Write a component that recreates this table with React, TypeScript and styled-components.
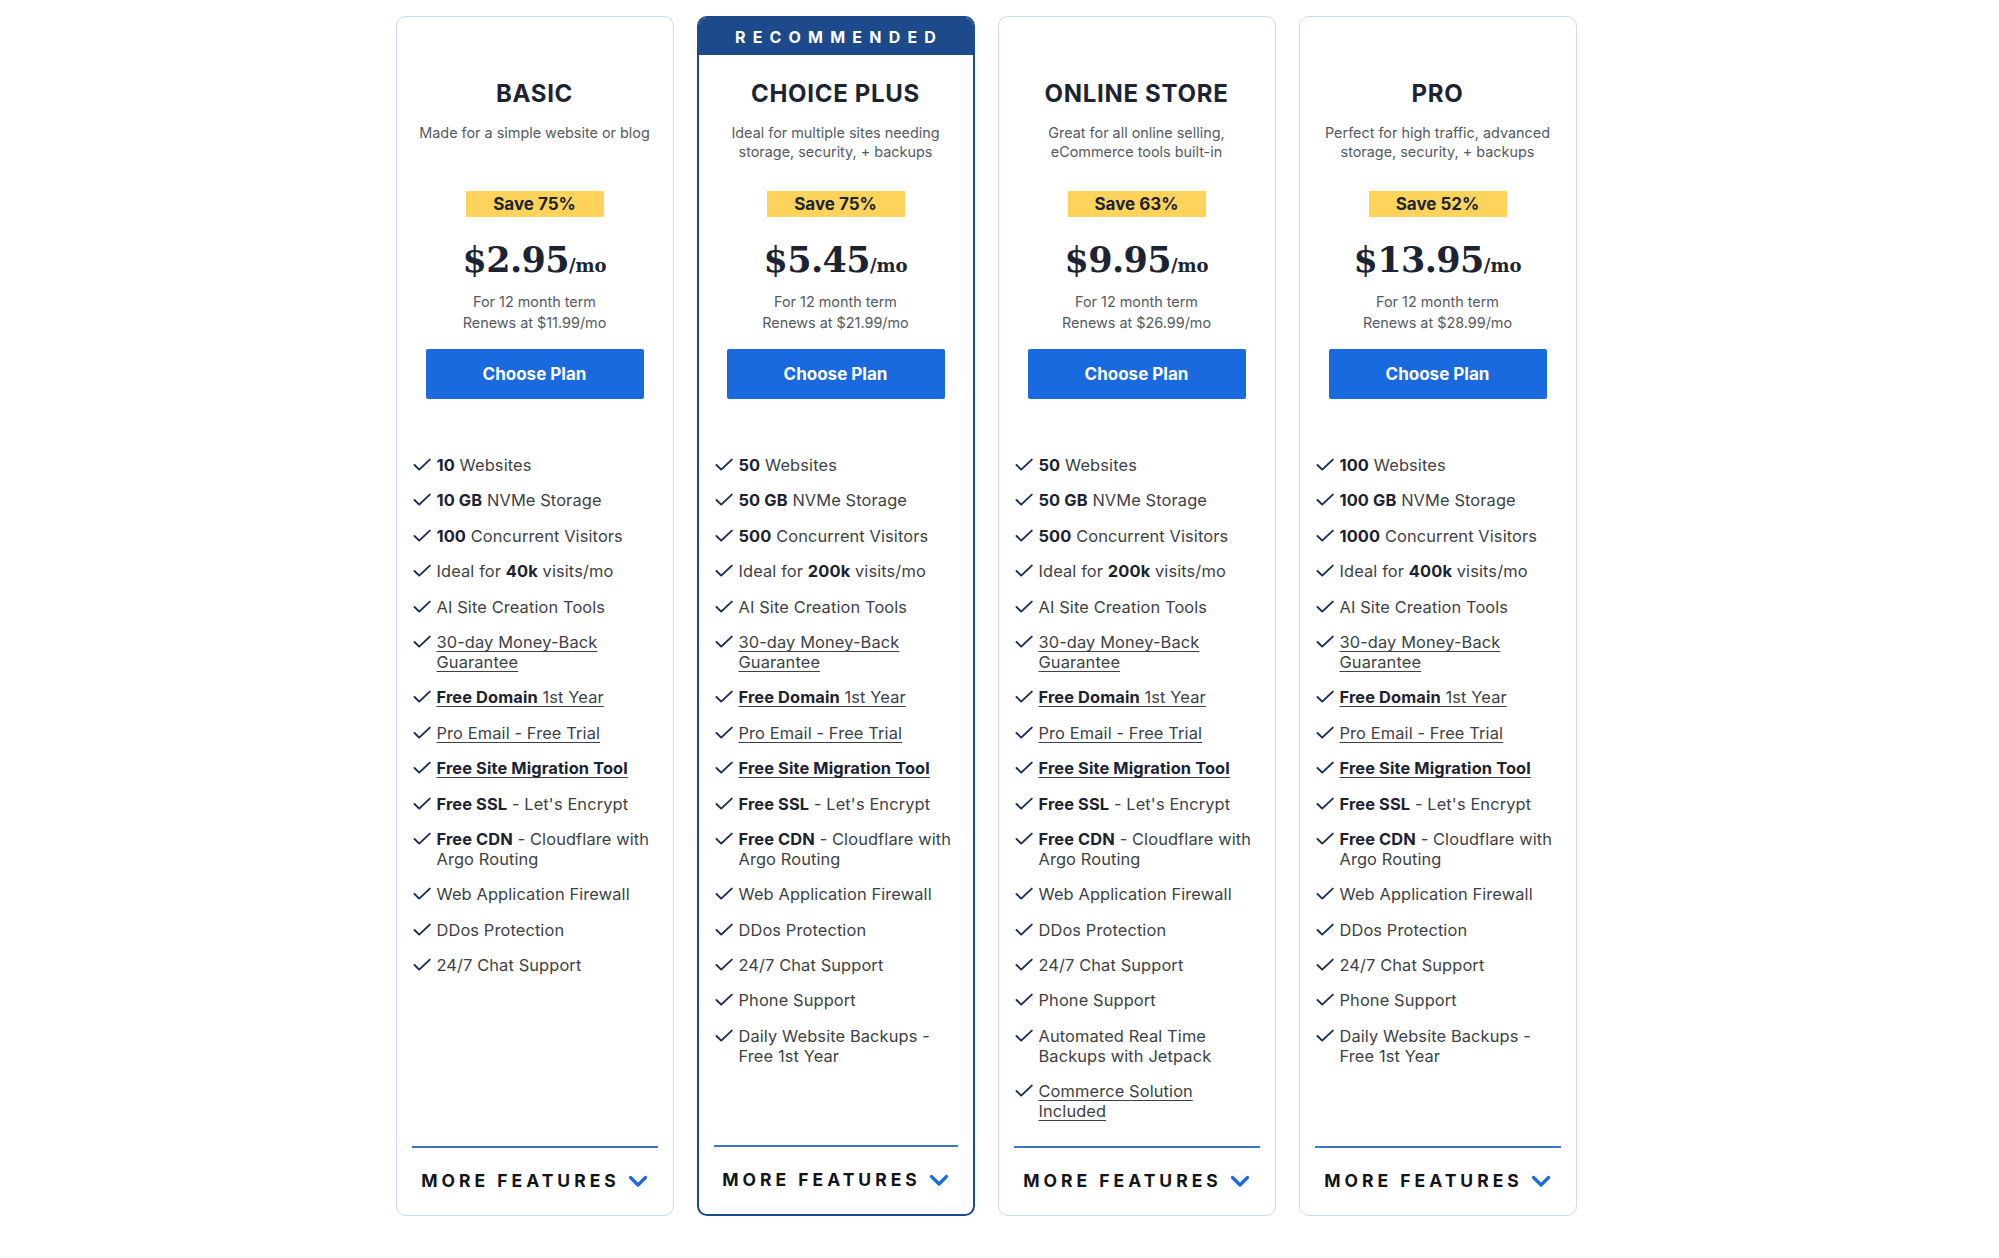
import React from "react";
import styled, { createGlobalStyle } from "styled-components";

type Part = string | { b: string };
interface Feature {
  parts: Part[];
  link?: boolean;
}
interface Plan {
  name: string;
  desc: string[];
  save: string;
  price: string;
  renew: string;
  recommended?: boolean;
  features: Feature[];
}

const f = (parts: Part[], link = false): Feature => ({ parts, link });

const common = (sites: string, gb: string, visitors: string, visits: string): Feature[] => [
  f([{ b: sites }, " Websites"]),
  f([{ b: gb }, " NVMe Storage"]),
  f([{ b: visitors }, " Concurrent Visitors"]),
  f(["Ideal for ", { b: visits }, " visits/mo"]),
  f(["AI Site Creation Tools"]),
  f(["30-day Money-Back Guarantee"], true),
  f([{ b: "Free Domain" }, " 1st Year"], true),
  f(["Pro Email - Free Trial"], true),
  f([{ b: "Free Site Migration Tool" }], true),
  f([{ b: "Free SSL" }, " - Let's Encrypt"]),
  f([{ b: "Free CDN" }, " - Cloudflare with Argo Routing"]),
  f(["Web Application Firewall"]),
  f(["DDos Protection"]),
  f(["24/7 Chat Support"]),
];

const plans: Plan[] = [
  {
    name: "BASIC",
    desc: ["Made for a simple website or blog"],
    save: "Save 75%",
    price: "$2.95",
    renew: "$11.99",
    features: common("10", "10 GB", "100", "40k"),
  },
  {
    name: "CHOICE PLUS",
    desc: ["Ideal for multiple sites needing", "storage, security, + backups"],
    save: "Save 75%",
    price: "$5.45",
    renew: "$21.99",
    recommended: true,
    features: [
      ...common("50", "50 GB", "500", "200k"),
      f(["Phone Support"]),
      f(["Daily Website Backups - Free 1st Year"]),
    ],
  },
  {
    name: "ONLINE STORE",
    desc: ["Great for all online selling,", "eCommerce tools built-in"],
    save: "Save 63%",
    price: "$9.95",
    renew: "$26.99",
    features: [
      ...common("50", "50 GB", "500", "200k"),
      f(["Phone Support"]),
      f(["Automated Real Time Backups with Jetpack"]),
      f(["Commerce Solution Included"], true),
    ],
  },
  {
    name: "PRO",
    desc: ["Perfect for high traffic, advanced", "storage, security, + backups"],
    save: "Save 52%",
    price: "$13.95",
    renew: "$28.99",
    features: [
      ...common("100", "100 GB", "1000", "400k"),
      f(["Phone Support"]),
      f(["Daily Website Backups - Free 1st Year"]),
    ],
  },
];

const GlobalStyle = createGlobalStyle`
  html, body {
    margin: 0;
    padding: 0;
    background: #ffffff;
  }
  body {
    font-family: Inter, "Noto Sans", sans-serif;
    -webkit-font-smoothing: antialiased;
  }
`;

const Page = styled.main`
  display: flex;
  justify-content: center;
  align-items: flex-start;
  padding: 16px 27px 0 0;
  min-height: 1258px;
  box-sizing: border-box;
`;

const Cards = styled.div`
  display: flex;
  align-items: stretch;
  gap: 23px;
`;

const Card = styled.section<{ $rec?: boolean }>`
  width: 278px;
  box-sizing: border-box;
  border: ${(p) => (p.$rec ? "2px solid #1d4a8b" : "1px solid #c8dbf2")};
  border-radius: 10px;
  overflow: hidden;
  background: #fff;
  display: flex;
  flex-direction: column;
`;

const Ribbon = styled.div<{ $show?: boolean }>`
  height: ${(p) => (p.$show ? 37 : 38)}px;
  flex-shrink: 0;
  background: ${(p) => (p.$show ? "#1d4a8b" : "transparent")};
  color: #fff;
  display: flex;
  align-items: center;
  justify-content: center;
  font-size: 16px;
  font-weight: 700;
  letter-spacing: 7.2px;
  padding-left: 7px;
`;

const Body = styled.div`
  flex: 1;
  display: flex;
  flex-direction: column;
  padding: 0 15px;
`;

const Title = styled.h2`
  margin: 25px 0 0;
  text-align: center;
  font-size: 24px;
  line-height: 28px;
  font-weight: 700;
  letter-spacing: 0.7px;
  color: #1c2434;
`;

const Desc = styled.p`
  margin: 15px 0 0;
  min-height: 40px;
  text-align: center;
  font-size: 14.4px;
  line-height: 19px;
  color: #555a60;
`;

const Badge = styled.div`
  margin: 28px auto 0;
  width: 138px;
  height: 26px;
  background: #fdd35c;
  display: flex;
  align-items: center;
  justify-content: center;
  font-size: 17px;
  font-weight: 700;
  color: #1c2434;
`;

const Price = styled.div`
  margin-top: 23px;
  text-align: center;
  font-family: "DejaVu Serif", "Liberation Serif", serif;
  font-weight: 700;
  font-size: 35px;
  line-height: 40px;
  color: #1c2434;
  letter-spacing: -0.6px;
`;

const Unit = styled.span`
  font-size: 18px;
  line-height: 0;
  letter-spacing: 0;
`;

const Term = styled.p`
  margin: 11px 0 0;
  text-align: center;
  font-size: 14.4px;
  line-height: 21px;
  color: #555a60;
`;

const ChooseButton = styled.button`
  margin: 16px auto 0;
  width: 218px;
  height: 50px;
  flex-shrink: 0;
  border: none;
  border-radius: 2px;
  background: #1a6adf;
  color: #fff;
  font-family: inherit;
  font-size: 17px;
  font-weight: 700;
  cursor: pointer;
`;

const Features = styled.ul`
  flex: 1;
  list-style: none;
  margin: 56px 0 25px;
  padding: 0 0 0 1px;
  display: flex;
  flex-direction: column;
  gap: 15.4px;
`;

const Item = styled.li`
  display: flex;
  gap: 6px;
  font-size: 16.4px;
  line-height: 20px;
  letter-spacing: 0.12px;
  color: #3d3f44;
`;

const ItemText = styled.span<{ $link?: boolean }>`
  flex: 1;
  text-decoration: ${(p) => (p.$link ? "underline" : "none")};
  text-underline-offset: 3px;
  text-decoration-thickness: 1px;
`;

const Strong = styled.b`
  font-weight: 700;
  color: #1c2230;
`;

const CheckIcon = styled.svg`
  width: 18px;
  height: 20px;
  flex-shrink: 0;
`;

const Footer = styled.div`
  border-top: 2px solid #3b76c8;
  padding: 22px 0 23px;
  display: flex;
  align-items: center;
  justify-content: center;
  gap: 8px;
`;

const MoreLabel = styled.span`
  font-size: 17.5px;
  line-height: 22px;
  font-weight: 700;
  letter-spacing: 4px;
  color: #121418;
`;

const Chevron = styled.svg`
  width: 20px;
  height: 13px;
`;

const Check = () => (
  <CheckIcon viewBox="0 0 18 20" fill="none">
    <path d="M1.5 10 L6.2 14.6 L16.8 4.6" stroke="#1c2d55" strokeWidth="1.9" strokeLinecap="round" strokeLinejoin="round" />
  </CheckIcon>
);

const PlanCard: React.FC<{ plan: Plan }> = ({ plan }) => (
  <Card $rec={plan.recommended}>
    <Ribbon $show={plan.recommended}>{plan.recommended ? "RECOMMENDED" : ""}</Ribbon>
    <Body>
      <Title>{plan.name}</Title>
      <Desc>
        {plan.desc.map((line, i) => (
          <React.Fragment key={i}>
            {i > 0 && <br />}
            {line}
          </React.Fragment>
        ))}
      </Desc>
      <Badge>{plan.save}</Badge>
      <Price>
        {plan.price}
        <Unit>/mo</Unit>
      </Price>
      <Term>
        For 12 month term
        <br />
        Renews at {plan.renew}/mo
      </Term>
      <ChooseButton>Choose Plan</ChooseButton>
      <Features>
        {plan.features.map((feat, i) => (
          <Item key={i}>
            <Check />
            <ItemText $link={feat.link}>
              {feat.parts.map((p, j) =>
                typeof p === "string" ? (
                  <React.Fragment key={j}>{p}</React.Fragment>
                ) : (
                  <Strong key={j}>{p.b}</Strong>
                )
              )}
            </ItemText>
          </Item>
        ))}
      </Features>
      <Footer>
        <MoreLabel>MORE FEATURES</MoreLabel>
        <Chevron viewBox="0 0 20 13" fill="none">
          <path d="M2.5 2.5 L10 10 L17.5 2.5" stroke="#1a6adf" strokeWidth="3.2" strokeLinecap="round" strokeLinejoin="round" />
        </Chevron>
      </Footer>
    </Body>
  </Card>
);

export default function App() {
  return (
    <>
      <GlobalStyle />
      <Page>
        <Cards>
          {plans.map((p) => (
            <PlanCard key={p.name} plan={p} />
          ))}
        </Cards>
      </Page>
    </>
  );
}
